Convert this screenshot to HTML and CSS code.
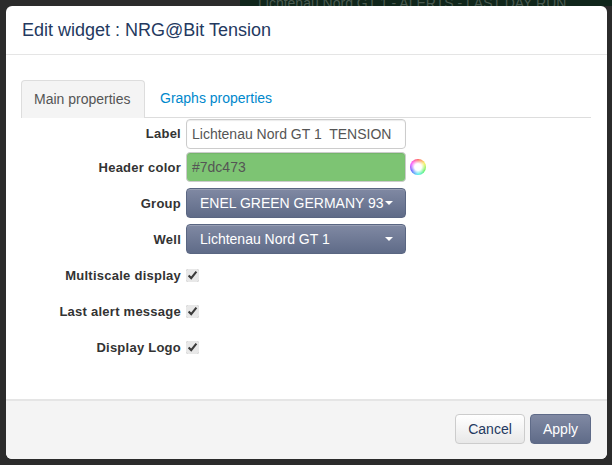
FILE: index.html
```html
<!DOCTYPE html>
<html lang="en">
<head>
<meta charset="utf-8">
<title>Edit widget</title>
<link rel="stylesheet" href="styles.css">
</head>
<body>
<div class="backdrop-text">Lichtenau Nord GT 1 - ALERTS - LAST DAY RUN</div>
<div class="modal">
  <header class="modal-header"><h3>Edit widget : NRG@Bit Tension</h3></header>
  <main class="modal-body">
    <nav class="tabs">
      <a class="tab active">Main properties</a>
      <a class="tab">Graphs properties</a>
    </nav>
    <form class="form">
      <div class="row">
        <label class="lbl">Label</label>
        <input class="field" type="text" value="Lichtenau Nord GT 1  TENSION">
      </div>
      <div class="row">
        <label class="lbl">Header color</label>
        <input class="field color" type="text" value="#7dc473">
        <span class="wheel"></span>
      </div>
      <div class="row">
        <label class="lbl">Group</label>
        <button type="button" class="select"><span>ENEL GREEN GERMANY 93</span><i class="caret"></i></button>
      </div>
      <div class="row">
        <label class="lbl">Well</label>
        <button type="button" class="select"><span>Lichtenau Nord GT 1</span><i class="caret"></i></button>
      </div>
      <div class="row">
        <label class="lbl">Multiscale display</label>
        <input class="check" type="checkbox" checked>
      </div>
      <div class="row">
        <label class="lbl">Last alert message</label>
        <input class="check" type="checkbox" checked>
      </div>
      <div class="row">
        <label class="lbl">Display Logo</label>
        <input class="check" type="checkbox" checked>
      </div>
    </form>
  </main>
  <footer class="modal-footer">
    <button type="button" class="btn cancel">Cancel</button>
    <button type="button" class="btn apply">Apply</button>
  </footer>
</div>
</body>
</html>
```
FILE: styles.css
```css
* { box-sizing: border-box; }
html, body { height: 100%; }
body {
  margin: 0;
  height: 465px;
  overflow: hidden;
  background: #2b2b2b;
  font-family: "Liberation Sans", Arial, sans-serif;
  font-size: 14px;
  color: #333;
  padding: 6px 5px 6px 6px;
}
.backdrop-text {
  position: absolute;
  left: 240px;
  top: 0;
  width: 372px;
  height: 6px;
  overflow: hidden;
  background: #10261b;
  color: #4a5a50;
  font-size: 14px;
  line-height: 6px;
  white-space: nowrap;
  padding-left: 18px;
}
.modal {
  position: relative;
  width: 601px;
  height: 453px;
  background: #fff;
  border-radius: 6px;
  display: flex;
  flex-direction: column;
  overflow: hidden;
}
.modal-header {
  height: 49px;
  flex: none;
  border-bottom: 1px solid #e5e5e5;
  padding: 0 16px;
  display: flex;
  align-items: center;
}
.modal-header h3 {
  margin: 0;
  font-size: 18px;
  font-weight: 400;
  color: #24395f;
}
.modal-body {
  flex: 1;
  padding: 25px 16px 0 15px;
}
.tabs {
  display: flex;
  height: 38px;
  border-bottom: 1px solid #ddd;
}
.tab {
  height: 38px;
  padding: 0 13px;
  line-height: 37px;
  color: #0088cc;
  font-size: 14px;
  width: 124px;
  white-space: nowrap;
  margin-right: 2px;
}
.tab + .tab { padding-left: 13px; width: auto; }
.tab.active {
  color: #555;
  background: #f4f4f4;
  border: 1px solid #ddd;
  border-bottom: 0;
  border-radius: 4px 4px 0 0;
  line-height: 36px;
  padding: 0 12px;
}
.form { display: flex; flex-direction: column; }
.row {
  height: 36px;
  display: flex;
  align-items: center;
  position: relative;
}
.row:first-child { height: 31px; }
.lbl {
  width: 160px;
  text-align: right;
  font-weight: 700;
  font-size: 13px;
  letter-spacing: 0.25px;
  color: #333;
  margin-right: 5px;
  white-space: nowrap;
}
.field {
  width: 220px;
  height: 30px;
  border: 1px solid #ccc;
  border-radius: 4px;
  padding: 0 5px;
  font: 14px "Liberation Sans", Arial, sans-serif;
  color: #555;
  background: #fff;
  box-shadow: inset 0 1px 1px rgba(0,0,0,.08);
}
.field.color { background: #7dc473; }
.wheel {
  width: 16px;
  height: 16px;
  margin-left: 4px;
  border-radius: 50%;
  background:
    radial-gradient(circle, #fff 0 30%, rgba(255,255,255,0) 75%),
    conic-gradient(#f44, #f4f040, #4e4, #3ee, #44f, #f3f, #f44);
}
.select {
  width: 220px;
  height: 30px;
  padding: 0 12px 0 13px;
  display: flex;
  align-items: center;
  justify-content: space-between;
  border: 1px solid #5a6682;
  border-radius: 4px;
  background: linear-gradient(#8089a3, #5f6b88);
  color: #fff;
  font: 14px "Liberation Sans", Arial, sans-serif;
  box-shadow: inset 0 1px 0 rgba(255,255,255,.2);
}
.caret {
  width: 0;
  height: 0;
  border-left: 4px solid transparent;
  border-right: 4px solid transparent;
  border-top: 4px solid #fff;
}
.check {
  width: 13px;
  height: 13px;
  margin: 0 0 0 0;
  accent-color: #e8e8e8;
}
.modal-footer {
  height: 60px;
  flex: none;
  background: #f4f4f4;
  border-top: 2px solid #e5e5e5;
  display: flex;
  justify-content: flex-end;
  align-items: flex-start;
  gap: 5px;
  padding: 13px 16px 0 0;
}
.btn {
  height: 30px;
  border-radius: 4px;
  font: 14px "Liberation Sans", Arial, sans-serif;
}
.cancel {
  width: 70px;
  border: 1px solid #ccc;
  background: linear-gradient(#fff, #e8e8e8);
  color: #24395f;
}
.apply {
  width: 61px;
  border: 1px solid #5f6b88;
  background: linear-gradient(#8089a3, #5f6b88);
  color: #fff;
}
```
